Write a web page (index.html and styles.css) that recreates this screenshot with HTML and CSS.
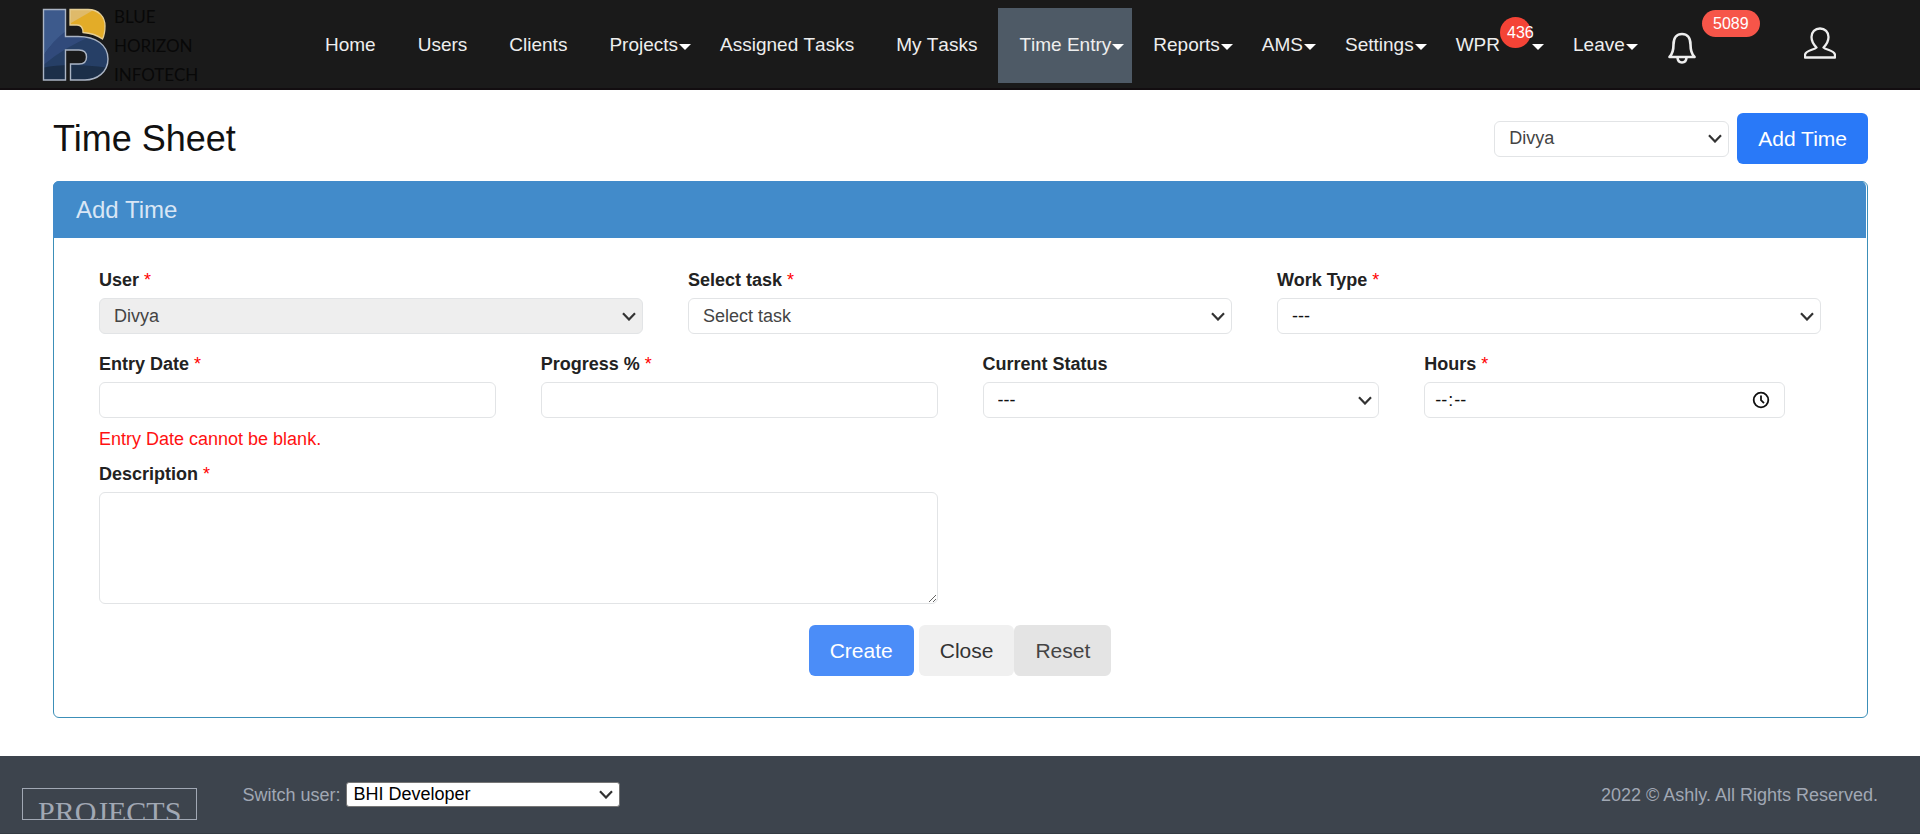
FILE: index.html
```html
<!DOCTYPE html>
<html lang="en">
<head>
<meta charset="utf-8">
<meta name="viewport" content="width=device-width, initial-scale=1">
<title>Time Sheet</title>
<link rel="stylesheet" href="styles.css">
</head>
<body>
<header class="topbar">
  <a class="logo" href="#">
    <svg class="logo-mark" viewBox="0 0 68 74" aria-hidden="true">
      <defs>
        <clipPath id="bowl"><path d="M1.500 1.500H23.500V28.500H36C54 28.500 66 37 66 51C66 64 55 72 43 72H28.500V56H37C42 56 44.500 53 44.500 49C44.500 45 42 42 37 42H23.500V72H1.500Z"/></clipPath>
        <clipPath id="sun"><path d="M28 1.500H46C57 1.500 63 9 63 18C63 23 62 28 60.500 31C55 27 48 25 41 24.500C41 20 39 17 35 17H28Z"/></clipPath>
      </defs>
      <g clip-path="url(#bowl)">
        <rect width="68" height="74" fill="#263f66"/>
        <path d="M0 0H24V26Q10 33 0 50Z" fill="#3d5a8c"/>
        <path d="M0 50Q10 33 24 23V28H50Q24 38 0 58Z" fill="#314a7b"/>
        <path d="M0 60Q25 54 68 60V74H0Z" fill="#1c2f49"/>
      </g>
      <path d="M1.500 1.500H23.500V28.500H36C54 28.500 66 37 66 51C66 64 55 72 43 72H28.500V56H37C42 56 44.500 53 44.500 49C44.500 45 42 42 37 42H23.500V72H1.500Z" fill="none" stroke="#aab4c4" stroke-width="1.400"/>
      <g clip-path="url(#sun)">
        <rect width="68" height="34" fill="#e3ac28"/>
        <path d="M27 0H55L29 15Z" fill="#dfba6a"/>
      </g>
      <path d="M28 1.500H46C57 1.500 63 9 63 18C63 23 62 28 60.500 31C55 27 48 25 41 24.500C41 20 39 17 35 17H28Z" fill="none" stroke="#e6cf94" stroke-width="1.300"/>
    </svg>
    <span class="logo-text"><span>BLUE</span><span>HORIZON</span><span>INFOTECH</span></span>
  </a>
  <nav class="menu">
    <a href="#">Home</a>
    <a href="#">Users</a>
    <a href="#">Clients</a>
    <a class="drop" href="#">Projects</a>
    <a href="#">Assigned Tasks</a>
    <a href="#">My Tasks</a>
    <a class="drop active" href="#">Time Entry</a>
    <a class="drop" href="#">Reports</a>
    <a class="drop" href="#">AMS</a>
    <a class="drop" href="#">Settings</a>
    <a class="drop" href="#">WPR<span class="dot">436</span></a>
    <a class="drop" href="#">Leave</a>
  </nav>
  <a class="bell" href="#" aria-label="Notifications">
    <svg viewBox="0 0 28 32" width="28" height="32" fill="none" stroke="#eee" stroke-width="2.600" stroke-linejoin="round">
      <path d="M1.500 25C4.500 22 5.500 18.500 5.500 12.500C5.500 5.500 9 2 14 2S22.500 5.500 22.500 12.500C22.500 18.500 23.500 22 26.500 25Z"/>
      <path d="M9.500 25.500C9.700 28.700 11.300 30.500 14 30.500S18.300 28.700 18.500 25.500"/>
    </svg>
    <span class="pill">5089</span>
  </a>
  <a class="account" href="#" aria-label="Account">
    <svg viewBox="0 0 32 32" width="32" height="32" fill="none" stroke="#eee" stroke-width="2.300" stroke-linejoin="round">
      <path d="M12.500 20.500C9.500 17.500 7.500 14 7.500 10C7.500 5 11 1.500 16 1.500S24.500 5 24.500 10C24.500 14 22.500 17.500 19.500 20.500C22 23 31 23.500 31 28V30.500H1V28C1 23.500 10 23 12.500 20.500Z"/>
    </svg>
  </a>
</header>

<main class="page">
  <div class="page-head">
    <h1>Time Sheet</h1>
    <select class="control user-pick" aria-label="Show user"><option>Divya</option></select>
    <button class="btn btn-add" type="button">Add Time</button>
  </div>

  <section class="panel">
    <h2>Add Time</h2>
    <form class="form">
      <div class="row thirds">
        <div class="field">
          <label for="user">User <i>*</i></label>
          <select class="control" id="user" disabled><option>Divya</option></select>
        </div>
        <div class="field">
          <label for="task">Select task <i>*</i></label>
          <select class="control" id="task"><option>Select task</option></select>
        </div>
        <div class="field">
          <label for="type">Work Type <i>*</i></label>
          <select class="control dark" id="type"><option>---</option></select>
        </div>
      </div>
      <div class="row quarters">
        <div class="field">
          <label for="date">Entry Date <i>*</i></label>
          <input class="control" id="date" type="text" aria-describedby="date-error">
          <p class="error" id="date-error">Entry Date cannot be blank.</p>
        </div>
        <div class="field">
          <label for="progress">Progress % <i>*</i></label>
          <input class="control" id="progress" type="text">
        </div>
        <div class="field">
          <label for="status">Current Status</label>
          <select class="control dark" id="status"><option>---</option></select>
        </div>
        <div class="field">
          <label for="hours">Hours <i>*</i></label>
          <input class="control time" id="hours" type="time">
        </div>
      </div>
      <div class="row halves">
        <div class="field">
          <label for="description">Description <i>*</i></label>
          <textarea class="control area" id="description"></textarea>
        </div>
      </div>
      <div class="actions">
        <button class="btn btn-create" type="button">Create</button>
        <button class="btn btn-close" type="button">Close</button>
        <button class="btn btn-reset" type="reset">Reset</button>
      </div>
    </form>
  </section>
</main>

<footer class="footer">
  <a class="brand" href="#">PROJECTS</a>
  <label for="switch">Switch user:</label>
  <select id="switch" class="switch"><option>BHI Developer</option></select>
  <p class="copy">2022 © Ashly. All Rights Reserved.</p>
</footer>
</body>
</html>
```

FILE: styles.css
```css
* {
  box-sizing: border-box;
}

body {
  margin: 0;
  min-height: 100vh;
  display: flex;
  flex-direction: column;
  background: #fff;
  color: #1c1c1c;
  font-family: "Liberation Sans", Arial, sans-serif;
  font-size: 18px;
  line-height: 27px;
}

a {
  color: inherit;
  text-decoration: none;
}

h1, h2, p {
  margin: 0;
  font-weight: 400;
}

/* Top bar */
.topbar {
  display: flex;
  align-items: flex-start;
  padding: 8px 84px 5px 42px;
  background: #1a1a1a;
  border-bottom: 2px solid #120d10;
  color: #eee;
}

.logo {
  display: flex;
  flex: 0 0 262px;
  gap: 4px;
  height: 74px;
}

.logo-mark {
  width: 68px;
  height: 74px;
}

.logo-text {
  display: flex;
  flex-direction: column;
  font: 17px/29px Lato, sans-serif;
  margin-top: -6px;
  color: #080808;
}

.menu {
  display: flex;
  font-size: 19px;
  font-kerning: none;
  line-height: 73px;
  white-space: nowrap;
}

.menu a {
  position: relative;
  display: flex;
  height: 75px;
  padding: 0 21px;
}

.menu .active {
  background: #4e5a66;
}

.drop::after {
  content: "";
  position: absolute;
  right: 8px;
  top: 36px;
  border: 6px solid transparent;
  border-top-color: #fff;
  border-bottom: 0;
}

.dot {
  width: 31px;
  height: 31px;
  margin-top: 9px;
  padding-left: 7px;
  border-radius: 50%;
  background: #f44336;
  color: #fff;
  font-size: 16px;
  line-height: 31px;
}

.bell {
  position: relative;
  height: 32px;
  margin: 24px 0 0 22px;
}

.bell svg, .account svg {
  display: block;
}

.pill {
  position: absolute;
  left: 34px;
  top: -22px;
  width: 58px;
  border-radius: 14px;
  background: #f65549;
  color: #fff;
  font-size: 16px;
  text-align: center;
}

.account {
  margin: 19px 0 0 auto;
}

/* Page heading */
.page {
  flex: 1;
  padding: 23px 52px 38px 53px;
}

.page-head {
  display: flex;
  align-items: center;
  gap: 8px;
  margin-bottom: 17px;
}

h1 {
  flex: 1;
  color: #111;
  font-size: 36px;
  line-height: 45px;
}

/* Controls */
.control {
  display: block;
  width: 100%;
  height: 36px;
  margin: 0;
  padding: 0 14px;
  border: 1px solid #e2e4e6;
  border-radius: 6px;
  background-color: #fff;
  color: #444;
  font: inherit;
  opacity: 1;
}

select.control, .switch {
  appearance: none;
  background-image: url("data:image/svg+xml,%3Csvg xmlns='http://www.w3.org/2000/svg' width='14' height='9' viewBox='0 0 14 9'%3E%3Cpath d='M1 1.200L7 7.500L13 1.200' fill='none' stroke='%23333' stroke-width='2.200'/%3E%3C/svg%3E");
  background-repeat: no-repeat;
  background-position: right 6px center;
}

select.control:disabled {
  background-color: #eee;
}

select.dark {
  color: #111;
}

.user-pick {
  width: 235px;
}

.time {
  width: 91%;
  padding: 0 14px 0 9px;
  color: #111;
}

.time::-webkit-datetime-edit-ampm-field {
  display: none;
}

.time::-webkit-calendar-picker-indicator {
  width: 18px;
  height: 18px;
  padding: 0;
  background: url("data:image/svg+xml,%3Csvg xmlns='http://www.w3.org/2000/svg' width='18' height='18' viewBox='0 0 18 18' fill='none' stroke='%23111' stroke-width='1.800'%3E%3Ccircle cx='9' cy='9' r='7.300'/%3E%3Cpath d='M9 4.500V9.200L12 12.200'/%3E%3C/svg%3E") center no-repeat;
}

.area {
  height: 112px;
  resize: vertical;
}

.btn {
  height: 51px;
  padding: 0 21px;
  border: 0;
  border-radius: 6px;
  font: inherit;
  font-size: 21px;
}

.btn-add {
  background: #2979f8;
  color: #fff;
}

.btn-create {
  margin-right: 5px;
  background: #4b8df8;
  color: #fff;
}

.btn-close {
  background: #f0f0f0;
  color: #333;
}

.btn-reset {
  background: #e4e4e4;
  color: #444;
}

/* Add time panel */
.panel {
  border: 1px solid #3c8fb8;
  border-radius: 6px;
}

h2 {
  margin: -1px 1px 0 -1px;
  padding: 0 23px;
  border-radius: 6px 6px 0 0;
  background: #428bca;
  color: #d9e6f5;
  font-size: 24px;
  line-height: 57px;
}

.form {
  padding: 29px 46px 41px 45px;
}

.row {
  display: grid;
  column-gap: 45px;
}

.thirds {
  grid-template-columns: repeat(3, 1fr);
  margin-bottom: 17px;
}

.quarters {
  grid-template-columns: repeat(4, 1fr);
  margin-bottom: 8px;
}

.halves {
  grid-template-columns: repeat(2, 1fr);
}

.field label {
  display: block;
  margin-bottom: 4px;
  color: #222;
  font-weight: 700;
}

.field i {
  color: #f00;
  font-style: normal;
  font-weight: 400;
}

.error {
  margin-top: 8px;
  color: #f11;
}

.actions {
  display: flex;
  justify-content: center;
  margin-top: 21px;
}

/* Footer */
.footer {
  display: flex;
  align-items: flex-start;
  padding: 26px 42px 13px 22px;
  border-bottom: 1px solid #343b43;
  background: #3d444d;
  color: #a1a8b4;
}

.brand {
  height: 32px;
  margin: 6px 45px 0 0;
  padding: 0 15px;
  overflow: hidden;
  border: 1px solid #a1a8b4;
  font: 30px/45px "Liberation Serif", "Times New Roman", serif;
}

.switch {
  width: 274px;
  height: 25px;
  margin-left: 6px;
  padding: 0 6px;
  border: 1px solid #767676;
  border-radius: 3px;
  background-color: #fff;
  color: #000;
  font: inherit;
  line-height: 23px;
}

.copy {
  margin-left: auto;
}
```
